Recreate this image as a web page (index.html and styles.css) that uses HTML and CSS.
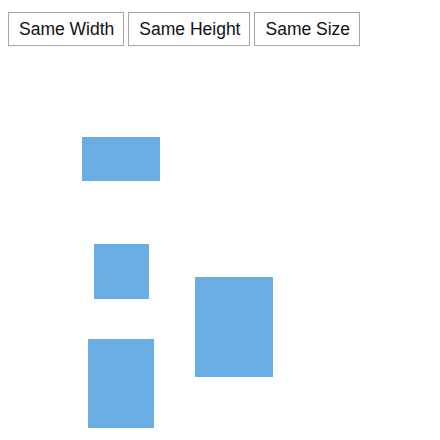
FILE: index.html
```html
<!DOCTYPE html>
<html>
<head>
<meta charset="utf-8">
<link rel="stylesheet" href="styles.css">
</head>
<body>
<div class="toolbar">
  <button class="btn">Same Width</button>
  <button class="btn">Same Height</button>
  <button class="btn">Same Size</button>
</div>
<div class="canvas">
  <div class="shape s1"></div>
  <div class="shape s2"></div>
  <div class="shape s3"></div>
  <div class="shape s4"></div>
</div>
</body>
</html>
```

FILE: styles.css
```css
html, body {
  margin: 0;
  padding: 0;
  background: #ffffff;
  font-family: "Liberation Sans", Arial, sans-serif;
}
.toolbar {
  display: flex;
  gap: 4px;
  padding: 12px 8px 0 8px;
}
.btn {
  font-family: "Liberation Sans", Arial, sans-serif;
  font-size: 17.5px;
  line-height: 22px;
  height: 34px;
  padding: 5px 9px 5px 10px;
  margin: 0;
  color: #111;
  background: #ffffff;
  border: 1px solid #a6a6a6;
  border-radius: 0;
}
.canvas {
  position: relative;
  height: 394px;
}
.shape {
  position: absolute;
  background: #69ade3;
}
.s1 { left: 82px; top: 91px; width: 78px; height: 44px; }
.s2 { left: 94px; top: 198px; width: 55px; height: 55px; }
.s3 { left: 195px; top: 231px; width: 78px; height: 100px; }
.s4 { left: 88px; top: 293px; width: 66px; height: 89px; }
```
